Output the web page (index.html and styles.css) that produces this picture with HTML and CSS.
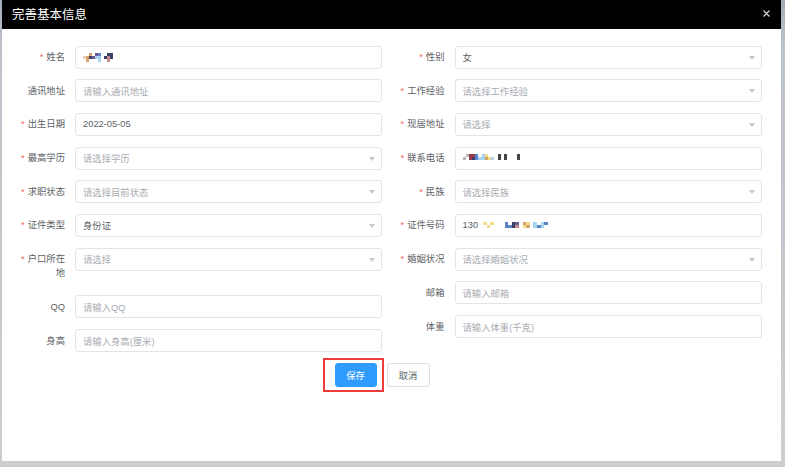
FILE: index.html
```html
<!DOCTYPE html>
<html>
<head>
    <meta charset="utf-8">
    <title>完善基本信息</title>
    <link rel="stylesheet" href="styles.css">
</head>
<body>
    <div class="dialog">
        <div class="dialog-header">
            <span class="dialog-title">完善基本信息</span>
            <svg class="dialog-close" width="7" height="7" viewBox="0 0 7 7">
                <path d="M0.5 0.5 L6.5 6.5 M6.5 0.5 L0.5 6.5" stroke="#d8d8d8" stroke-width="1.1" fill="none"/>
            </svg>
        </div>

        <div class="dialog-body">
            <div class="form-cols">
                <!-- left column -->
                <div class="form-col">
                    <div class="form-item">
                        <label class="form-label required">姓名</label>
                        <div class="form-control">
                            <span class="mosaic mosaic-name">
                                <i></i><i></i><i class="c-tan"></i><i></i><i class="c-pur"></i><i class="c-blue"></i><i></i><i></i><i class="c-navy"></i><i class="c-navy"></i>
                                <i class="c-peach"></i><i class="c-tan"></i><i class="c-navy"></i><i class="c-pur"></i><i class="c-lblue"></i><i class="c-lblue"></i><i></i><i class="c-navy"></i><i class="c-pink"></i><i class="c-navy"></i>
                                <i></i><i class="c-tan"></i><i></i><i></i><i></i><i class="c-lblue"></i><i></i><i></i><i class="c-pink"></i><i></i>
                            </span>
                        </div>
                    </div>
                    <div class="form-item">
                        <label class="form-label">通讯地址</label>
                        <div class="form-control placeholder">请输入通讯地址</div>
                    </div>
                    <div class="form-item">
                        <label class="form-label required">出生日期</label>
                        <div class="form-control">2022-05-05</div>
                    </div>
                    <div class="form-item">
                        <label class="form-label required">最高学历</label>
                        <div class="form-control select placeholder">请选择学历</div>
                    </div>
                    <div class="form-item">
                        <label class="form-label required">求职状态</label>
                        <div class="form-control select placeholder">请选择目前状态</div>
                    </div>
                    <div class="form-item">
                        <label class="form-label required">证件类型</label>
                        <div class="form-control select">身份证</div>
                    </div>
                    <div class="form-item">
                        <label class="form-label required">户口所在地</label>
                        <div class="form-control select placeholder">请选择</div>
                    </div>
                    <div class="form-item">
                        <label class="form-label">QQ</label>
                        <div class="form-control placeholder">请输入QQ</div>
                    </div>
                    <div class="form-item">
                        <label class="form-label">身高</label>
                        <div class="form-control placeholder">请输入身高(厘米)</div>
                    </div>
                </div>

                <!-- right column -->
                <div class="form-col">
                    <div class="form-item">
                        <label class="form-label required">性别</label>
                        <div class="form-control select">女</div>
                    </div>
                    <div class="form-item">
                        <label class="form-label required">工作经验</label>
                        <div class="form-control select placeholder">请选择工作经验</div>
                    </div>
                    <div class="form-item">
                        <label class="form-label required">现居地址</label>
                        <div class="form-control select placeholder">请选择</div>
                    </div>
                    <div class="form-item">
                        <label class="form-label required">联系电话</label>
                        <div class="form-control">
                            <span class="mosaic mosaic-phone">
                                <i></i><i class="c-gray"></i><i class="c-red"></i><i class="c-red"></i><i class="c-blue"></i><i></i><i class="c-lblue"></i><i class="c-yel"></i><i></i><i></i><i></i><i class="c-dark"></i><i></i><i class="c-dark"></i><i></i><i></i><i></i><i class="c-dark"></i>
                                <i class="c-gray"></i><i></i><i class="c-red"></i><i class="c-navy"></i><i class="c-blue"></i><i class="c-lblue"></i><i class="c-lblue"></i><i class="c-tan"></i><i class="c-yel"></i><i class="c-lblue"></i><i></i><i class="c-dark"></i><i></i><i class="c-dark"></i><i></i><i></i><i></i><i class="c-dark"></i>
                            </span>
                        </div>
                    </div>
                    <div class="form-item">
                        <label class="form-label required">民族</label>
                        <div class="form-control select placeholder">请选择民族</div>
                    </div>
                    <div class="form-item">
                        <label class="form-label required">证件号码</label>
                        <div class="form-control">
                            130
                            <span class="mosaic mosaic-id">
                                <i class="c-yel"></i><i></i><i class="c-yel"></i><i></i><i></i><i></i><i class="c-blue"></i><i></i><i class="c-navy"></i><i class="c-pur"></i><i></i><i class="c-tan"></i><i class="c-yel"></i><i></i><i class="c-lblue"></i><i></i><i class="c-lblue"></i><i class="c-blue"></i>
                                <i></i><i class="c-yel"></i><i></i><i></i><i></i><i></i><i class="c-blue"></i><i class="c-blue"></i><i class="c-navy"></i><i class="c-pink"></i><i></i><i class="c-yel"></i><i class="c-tan"></i><i></i><i class="c-lblue"></i><i class="c-blue"></i><i class="c-lblue"></i><i></i>
                            </span>
                        </div>
                    </div>
                    <div class="form-item">
                        <label class="form-label required">婚姻状况</label>
                        <div class="form-control select placeholder">请选择婚姻状况</div>
                    </div>
                    <div class="form-item">
                        <label class="form-label">邮箱</label>
                        <div class="form-control placeholder">请输入邮箱</div>
                    </div>
                    <div class="form-item">
                        <label class="form-label">体重</label>
                        <div class="form-control placeholder">请输入体重(千克)</div>
                    </div>
                </div>
            </div>

            <div class="form-actions">
                <span class="btn-wrap">
                    <button class="btn btn-primary">保存</button>
                    <span class="highlight-box"></span>
                </span>
                <button class="btn">取消</button>
            </div>
        </div>
    </div>
</body>
</html>
```

FILE: styles.css
```css
body {
    margin: 0;
    padding: 0;
    width: 785px;
    height: 467px;
    overflow: hidden;
    font-family: "Liberation Sans", "Noto Sans CJK SC", sans-serif;
    background: linear-gradient(to bottom, #a3abb8 0, #bcc1c8 40px, #cdcecf 100%);
}

.dialog {
    margin-left: 2px;
    width: 779px;
    height: 461px;
    background-color: #fff;
}

.dialog-header {
    height: 29px;
    background: #000;
    display: flex;
    align-items: center;
    justify-content: space-between;
    padding: 0 11px 0 10px;
    box-sizing: border-box;
}

.dialog-title {
    color: #fff;
    font-size: 12.5px;
    margin-top: -2px;
}

.dialog-close {
    display: block;
    margin-top: -3px;
}

.dialog-body {
    padding: 16.5px 10px 0 10px;
}

.form-cols {
    display: flex;
}

.form-col {
    flex: 1;
    padding-right: 9.5px;
}

.form-item {
    display: flex;
    align-items: flex-start;
    margin-bottom: 10.7px;
}

.form-label {
    width: 63px;
    flex-shrink: 0;
    box-sizing: border-box;
    padding: 4.5px 10px 4.5px 0;
    text-align: right;
    line-height: 14px;
    font-size: 9.33px;
    color: #606266;
}

.form-label.required::before {
    content: "*";
    color: #f56c6c;
    margin-right: 3px;
}

.form-control {
    flex: 1;
    height: 23px;
    box-sizing: border-box;
    border: 1px solid #e2e4e9;
    border-radius: 3px;
    padding: 0 7px;
    display: flex;
    align-items: center;
    font-size: 9.33px;
    color: #606266;
    position: relative;
}

.placeholder {
    color: #a9acb2;
}

.select::after {
    content: "";
    position: absolute;
    right: 6px;
    top: 9px;
    border-left: 3.5px solid transparent;
    border-right: 3.5px solid transparent;
    border-top: 4px solid #c4c7cc;
}

/* blurred personal data */
.mosaic {
    display: inline-grid;
    grid-auto-rows: 3px;
}

.mosaic i {
    display: block;
}

.mosaic-name {
    grid-template-columns: repeat(10, 3px);
}

.mosaic-phone {
    grid-template-columns: repeat(18, 3.2px);
    margin-top: -3px;
}

.mosaic-id {
    grid-template-columns: repeat(18, 3.6px);
    margin-left: 5px;
}

.c-tan { background: #d6a36c; }
.c-peach { background: #e9cdb8; }
.c-pur { background: #6b5a8e; }
.c-blue { background: #5a83c9; }
.c-lblue { background: #a8d4ef; }
.c-navy { background: #3c3f66; }
.c-pink { background: #c48a8e; }
.c-red { background: #9b3a4a; }
.c-yel { background: #f3dd8a; }
.c-gray { background: #b9b9b9; }
.c-dark { background: #444; }

.form-actions {
    display: flex;
    justify-content: center;
    gap: 10px;
    padding-right: 19px;
}

.btn-wrap {
    position: relative;
    display: block;
}

.btn {
    display: block;
    height: 24px;
    width: 43px;
    padding: 0;
    border: 1px solid #dcdfe6;
    border-radius: 3px;
    background-color: #fff;
    color: #606266;
    font-family: "Liberation Sans", "Noto Sans CJK SC", sans-serif;
    font-size: 9.33px;
}

.btn-primary {
    width: 42px;
    background-color: #2f9bff;
    border-color: #2f9bff;
    color: #fff;
}

.highlight-box {
    position: absolute;
    left: -12px;
    top: -5px;
    width: 57px;
    height: 30px;
    border: 2px solid #ee3b3b;
}
```
